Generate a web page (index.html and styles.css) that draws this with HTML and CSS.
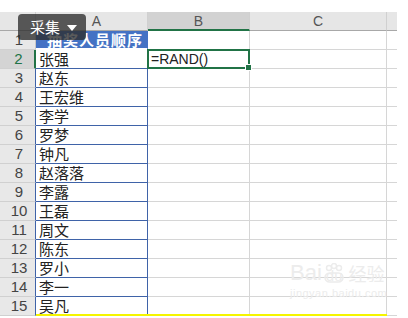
FILE: index.html
```
<!DOCTYPE html>
<html>
<head>
    <meta charset="utf-8" />
    <title>抽奖人员顺序</title>
    <link rel="stylesheet" href="styles.css">
</head>
<body>
<div class="page">
    <div class="sheet">
        <div class="row head">
            <div class="cell rh corner"></div>
            <div class="cell ca">A</div>
            <div class="cell cb on">B</div>
            <div class="cell cc">C</div>
            <div class="cell cd"></div>
        </div>
        <div class="row">
            <div class="cell rh">1</div>
            <div class="cell ca title">抽奖人员顺序</div>
            <div class="cell cb"></div>
            <div class="cell cc"></div>
            <div class="cell cd"></div>
        </div>
        <div class="row data cur">
            <div class="cell rh">2</div>
            <div class="cell ca">张强</div>
            <div class="cell cb sel">=RAND()</div>
            <div class="cell cc"></div>
            <div class="cell cd"></div>
        </div>
        <div class="row data">
            <div class="cell rh">3</div>
            <div class="cell ca">赵东</div>
            <div class="cell cb"></div>
            <div class="cell cc"></div>
            <div class="cell cd"></div>
        </div>
        <div class="row data">
            <div class="cell rh">4</div>
            <div class="cell ca">王宏维</div>
            <div class="cell cb"></div>
            <div class="cell cc"></div>
            <div class="cell cd"></div>
        </div>
        <div class="row data">
            <div class="cell rh">5</div>
            <div class="cell ca">李学</div>
            <div class="cell cb"></div>
            <div class="cell cc"></div>
            <div class="cell cd"></div>
        </div>
        <div class="row data">
            <div class="cell rh">6</div>
            <div class="cell ca">罗梦</div>
            <div class="cell cb"></div>
            <div class="cell cc"></div>
            <div class="cell cd"></div>
        </div>
        <div class="row data">
            <div class="cell rh">7</div>
            <div class="cell ca">钟凡</div>
            <div class="cell cb"></div>
            <div class="cell cc"></div>
            <div class="cell cd"></div>
        </div>
        <div class="row data">
            <div class="cell rh">8</div>
            <div class="cell ca">赵落落</div>
            <div class="cell cb"></div>
            <div class="cell cc"></div>
            <div class="cell cd"></div>
        </div>
        <div class="row data">
            <div class="cell rh">9</div>
            <div class="cell ca">李露</div>
            <div class="cell cb"></div>
            <div class="cell cc"></div>
            <div class="cell cd"></div>
        </div>
        <div class="row data">
            <div class="cell rh">10</div>
            <div class="cell ca">王磊</div>
            <div class="cell cb"></div>
            <div class="cell cc"></div>
            <div class="cell cd"></div>
        </div>
        <div class="row data">
            <div class="cell rh">11</div>
            <div class="cell ca">周文</div>
            <div class="cell cb"></div>
            <div class="cell cc"></div>
            <div class="cell cd"></div>
        </div>
        <div class="row data">
            <div class="cell rh">12</div>
            <div class="cell ca">陈东</div>
            <div class="cell cb"></div>
            <div class="cell cc"></div>
            <div class="cell cd"></div>
        </div>
        <div class="row data">
            <div class="cell rh">13</div>
            <div class="cell ca">罗小</div>
            <div class="cell cb"></div>
            <div class="cell cc"></div>
            <div class="cell cd"></div>
        </div>
        <div class="row data">
            <div class="cell rh">14</div>
            <div class="cell ca">李一</div>
            <div class="cell cb"></div>
            <div class="cell cc"></div>
            <div class="cell cd"></div>
        </div>
        <div class="row data">
            <div class="cell rh">15</div>
            <div class="cell ca">吴凡</div>
            <div class="cell cb"></div>
            <div class="cell cc"></div>
            <div class="cell cd"></div>
        </div>
        <div class="hl"></div>
    </div>

    <div class="tip">采集<span class="arr"></span></div>

    <div class="mark">
        <div class="mark-top">
            <span>Bai</span>
            <svg width="22" height="20" viewBox="0 0 22 20">
                <circle cx="6" cy="5" r="2.5" fill="none" stroke="#ececec" stroke-width="1.5"/>
                <circle cx="11" cy="3" r="2.5" fill="none" stroke="#ececec" stroke-width="1.5"/>
                <circle cx="16" cy="5" r="2.5" fill="none" stroke="#ececec" stroke-width="1.5"/>
                <rect x="2" y="10" width="18" height="9" rx="4.5" fill="none" stroke="#ececec" stroke-width="1.5"/>
            </svg>
            <span class="du">du</span>
            <span class="jy">经验</span>
        </div>
        <div class="mark-url">jingyan.baidu.com</div>
    </div>
</div>
</body>
</html>
```

FILE: styles.css
```
*{margin:0;padding:0;box-sizing:border-box;}
body{background:#fff;font-family:"Liberation Sans","Noto Sans CJK SC",sans-serif;color:#222;}

.page{position:relative;width:408px;height:318px;padding-top:12px;overflow:hidden;}
.sheet{width:397px;}

.row{display:flex;height:19px;}
.cell{height:19px;border-right:1px solid #d6d6d6;border-bottom:1px solid #d6d6d6;font-size:15px;line-height:18px;white-space:nowrap;}
.rh{width:36px;background:#e8e8e8;color:#444;text-align:center;padding-left:3px;border-right-color:#c8c8c8;border-bottom-color:#d0d0d0;}
.ca{width:112px;}
.cb{width:102px;}
.cc{width:137px;}
.cd{width:10px;border-right:none;}

/* column header */
.head .cell{background:#e6e6e6;color:#555;font-size:14px;text-align:center;border-bottom-color:#a8a8a8;border-right-color:#d0d0d0;}
.head .cd{background:#e6e6e6;}
.head .on{background:#d2d2d2;border-bottom:2px solid #217346;}
.head .ca{padding-left:10px;}

/* table in column A */
.title{background:#4472c4;color:#fff;font-family:"Noto Sans CJK SC",sans-serif;font-size:15px;font-weight:bold;letter-spacing:1px;padding-left:11px;border-right-color:#4472c4;border-bottom:2px solid #fff;}
.data .rh{border-right-color:#3f63a8;}
.data .ca{font-family:"Noto Sans CJK SC",sans-serif;padding-left:3px;border-right-color:#3f63a8;border-bottom-color:#3f63a8;}
.cur .rh{background:#d4d4d4;color:#217346;border-right:2px solid #217346;}

/* selected cell */
.sel{position:relative;border:2px solid #217346;margin-left:-1px;width:103px;margin-top:-1px;height:20px;padding-left:2px;font-size:14px;line-height:17px;}
.sel::after{content:"";position:absolute;right:-4px;bottom:-4px;width:5px;height:5px;background:#217346;border:1px solid #fff;}

.hl{height:2px;width:351px;margin-left:36px;margin-top:-2px;background:#f5f500;position:relative;}

/* popup button */
.tip{position:absolute;left:18px;top:14px;width:68px;height:26px;border-radius:4px;background:rgba(45,45,45,.78);color:#fff;font-family:"Noto Sans CJK SC",sans-serif;font-size:15px;line-height:26px;padding-left:12px;}
.arr{position:absolute;right:9px;top:11px;border-left:5px solid transparent;border-right:5px solid transparent;border-top:6px solid #fff;}

/* watermark */
.mark{position:absolute;left:290px;top:262px;color:#ececec;}
.mark-top{display:flex;align-items:flex-end;height:22px;font-size:22px;line-height:22px;font-family:"Liberation Sans",sans-serif;}
.mark-top svg{margin:0 1px 1px;}
.du{font-size:15px;line-height:16px;margin-left:-20px;margin-right:6px;}
.jy{font-family:"Noto Sans CJK SC",sans-serif;font-size:18px;}
.mark-url{font-size:11px;margin-top:3px;letter-spacing:0.5px;}
```
